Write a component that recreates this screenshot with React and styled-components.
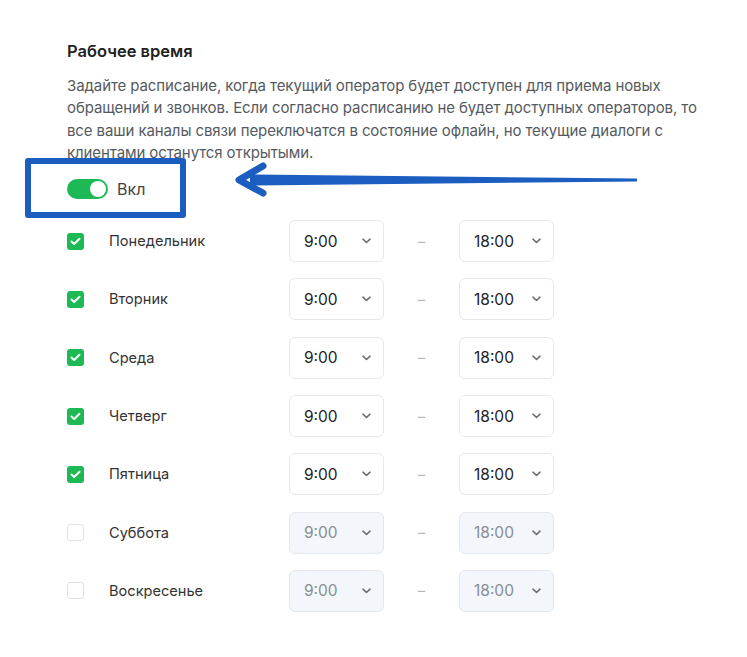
import styled, { createGlobalStyle } from "styled-components";

const GlobalStyle = createGlobalStyle`
  body {
    margin: 0;
    background: #fff;
    font-family: Inter, "Noto Sans", sans-serif;
    color: #222;
  }
`;

const Page = styled.div`
  position: relative;
  width: 747px;
  height: 657px;
  padding: 40px 0 0 67px;
  box-sizing: border-box;
`;

const Title = styled.h2`
  margin: 0;
  font-size: 16.5px;
  line-height: 22px;
  font-weight: 600;
  color: #222;
`;

const Description = styled.p`
  margin: 13px 0 0;
  font-size: 15px;
  line-height: 22.3px;
  letter-spacing: -0.1px;
  color: #555a60;
  white-space: nowrap;
`;

const ToggleRow = styled.div`
  display: flex;
  align-items: center;
  gap: 9px;
  margin-top: 15px;
  height: 20px;
`;

const Switch = styled.div`
  position: relative;
  width: 41px;
  height: 20px;
  border-radius: 10px;
  background: ${(p) => (p.on ? "#1db954" : "#d5d9de")};

  &::after {
    content: "";
    position: absolute;
    top: 2px;
    left: ${(p) => (p.on ? "23px" : "2px")};
    width: 16px;
    height: 16px;
    border-radius: 50%;
    background: #fff;
  }
`;

const ToggleLabel = styled.span`
  font-size: 16px;
  color: #444;
`;

const Days = styled.div`
  margin-top: 21px;
  display: flex;
  flex-direction: column;
  gap: 16.3px;
`;

const DayRow = styled.div`
  display: grid;
  grid-template-columns: 17px 205px 95px 75px 95px;
  align-items: center;
  height: 42px;
`;

const Check = styled.div`
  width: 17px;
  height: 17px;
  box-sizing: border-box;
  border-radius: 3px;
  display: flex;
  align-items: center;
  justify-content: center;
  background: ${(p) => (p.checked ? "#1db954" : "#fff")};
  border: ${(p) => (p.checked ? "none" : "1px solid #dfe3e8")};
`;

const DayName = styled.span`
  margin-left: 25px;
  font-size: 14.6px;
  color: #333;
`;

const Select = styled.div`
  height: 42px;
  box-sizing: border-box;
  border: 1px solid ${(p) => (p.disabled ? "#e3e8ee" : "#e6e8eb")};
  border-radius: 6px;
  background: ${(p) => (p.disabled ? "#f3f7fb" : "#fff")};
  display: flex;
  align-items: center;
  justify-content: space-between;
  padding: 0 12px 0 14px;
  font-size: 15.5px;
  color: ${(p) => (p.disabled ? "#888d93" : "#222")};
`;

const Dash = styled.span`
  text-align: center;
  color: #b5b9be;
  font-size: 15px;
`;

const Annotation = styled.div`
  position: absolute;
  left: 25px;
  top: 158px;
  width: 161px;
  height: 60px;
  box-sizing: border-box;
  border: 6px solid #1c5ec0;
  border-radius: 3px;
`;

const ArrowSvg = styled.svg`
  position: absolute;
  left: 230px;
  top: 160px;
`;

function CheckMark() {
  return (
    <svg width="11" height="9" viewBox="0 0 11 9">
      <path
        d="M1.5 4.5 L4.2 7 L9.5 1.8"
        fill="none"
        stroke="#fff"
        strokeWidth="2"
        strokeLinecap="round"
        strokeLinejoin="round"
      />
    </svg>
  );
}

function Chevron() {
  return (
    <svg width="9" height="6" viewBox="0 0 9 6">
      <path
        d="M1 1.2 L4.5 4.5 L8 1.2"
        fill="none"
        stroke="#6b7077"
        strokeWidth="1.6"
        strokeLinecap="round"
        strokeLinejoin="round"
      />
    </svg>
  );
}

function TimeSelect({ value, disabled }) {
  return (
    <Select disabled={disabled}>
      <span>{value}</span>
      <Chevron />
    </Select>
  );
}

const days = [
  { name: "Понедельник", on: true },
  { name: "Вторник", on: true },
  { name: "Среда", on: true },
  { name: "Четверг", on: true },
  { name: "Пятница", on: true },
  { name: "Суббота", on: false },
  { name: "Воскресенье", on: false },
];

export default function App() {
  return (
    <>
      <GlobalStyle />
      <Page>
        <Title>Рабочее время</Title>
        <Description>
          Задайте расписание, когда текущий оператор будет доступен для приема новых
          <br />
          обращений и звонков. Если согласно расписанию не будет доступных операторов, то
          <br />
          все ваши каналы связи переключатся в состояние офлайн, но текущие диалоги с
          <br />
          клиентами останутся открытыми.
        </Description>
        <ToggleRow>
          <Switch on />
          <ToggleLabel>Вкл</ToggleLabel>
        </ToggleRow>
        <Days>
          {days.map((d) => (
            <DayRow key={d.name}>
              <Check checked={d.on}>{d.on && <CheckMark />}</Check>
              <DayName>{d.name}</DayName>
              <TimeSelect value="9:00" disabled={!d.on} />
              <Dash>–</Dash>
              <TimeSelect value="18:00" disabled={!d.on} />
            </DayRow>
          ))}
        </Days>
        <Annotation />
        <ArrowSvg width="420" height="40" viewBox="0 0 420 40">
          <polygon points="20,14.5 407,18.5 407,21.5 20,25.5" fill="#1c5ec0" />
          <path
            d="M33 6 L9 20 L33 33"
            fill="none"
            stroke="#1c5ec0"
            strokeWidth="7"
            strokeLinecap="round"
            strokeLinejoin="round"
          />
        </ArrowSvg>
      </Page>
    </>
  );
}
